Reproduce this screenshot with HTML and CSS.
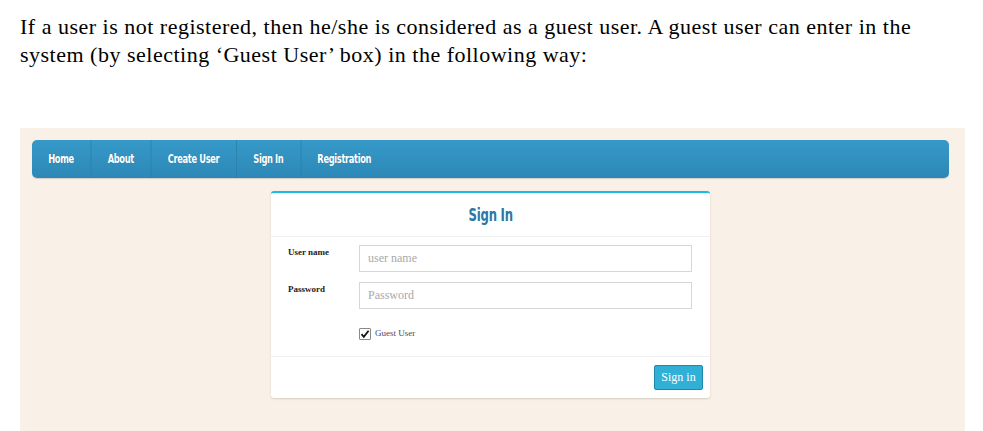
FILE: index.html
```html
<!DOCTYPE html>
<html>
<head>
<meta charset="utf-8">
<link rel="stylesheet" href="styles.css">
</head>
<body>
<p class="intro">If a user is not registered, then he/she is considered as a guest user. A guest user can enter in the system (by selecting ‘Guest User’ box) in the following way:</p>
<div class="stage">
  <nav class="navbar">
    <div class="nav-track">
      <a class="nav-item">Home</a>
      <a class="nav-item">About</a>
      <a class="nav-item">Create User</a>
      <a class="nav-item">Sign In</a>
      <a class="nav-item">Registration</a>
    </div>
  </nav>
  <div class="card">
    <div class="card-head"><span class="card-title">Sign In</span></div>
    <div class="card-body">
      <div class="row">
        <label class="label">User name</label>
        <div class="field">user name</div>
      </div>
      <div class="row">
        <label class="label">Password</label>
        <div class="field">Password</div>
      </div>
      <div class="check-row">
        <span class="checkbox"><svg width="10" height="10" viewBox="0 0 10 10"><path d="M1.5 5.2 L3.8 7.8 L8.6 1.8" fill="none" stroke="#111" stroke-width="1.8"/></svg></span>
        <span class="check-label">Guest User</span>
      </div>
    </div>
    <div class="card-foot">
      <button class="btn">Sign in</button>
    </div>
  </div>
</div>
</body>
</html>
```
FILE: styles.css
```css
html, body { margin: 0; padding: 0; background: #fff; }
body { padding: 0 18px 0 20px; }
.intro {
  margin: 0;
  padding-top: 13px;
  font-family: "Liberation Serif", serif;
  font-size: 22px;
  line-height: 28px;
  letter-spacing: 0.5px;
  color: #000;
  width: 920px;
}
.stage {
  margin-top: 59px;
  background: #f9f1e7;
  padding: 12px 16px 30px 12px;
  box-sizing: border-box;
  height: 303px;
}
.navbar {
  height: 38px;
  border-radius: 5px;
  background: linear-gradient(#3699c9, #2d88b6);
  box-shadow: 0 1px 1px rgba(0,0,0,0.15);
  overflow: hidden;
}
.nav-track {
  display: flex;
  height: 100%;
  width: 1191px;
  transform: scaleX(0.77);
  transform-origin: left center;
}
.nav-item {
  display: flex;
  align-items: center;
  padding: 0 22px 0 21px;
  color: #fff;
  font-family: "DejaVu Sans Condensed", "DejaVu Sans", sans-serif;
  font-stretch: condensed;
  font-weight: bold;
  font-size: 12px;
  letter-spacing: -0.45px;
  border-right: 1px solid #2a7fab;
  text-shadow: 0 0 1px rgba(0,0,0,0.2);
}
.nav-item:last-child { border-right: none; }
.card {
  width: 439px;
  margin: 13px auto 0;
  background: #fff;
  border-top: 2px solid #17bde6;
  border-radius: 3px;
  box-shadow: 0 1px 2px rgba(120,100,80,0.25);
}
.card-head {
  height: 43px;
  border-bottom: 1px solid #f1f1f1;
  display: flex;
  align-items: center;
  justify-content: center;
}
.card-title {
  display: inline-block;
  transform: scaleX(0.72);
  color: #2a78a6;
  font-family: "DejaVu Sans Condensed", "DejaVu Sans", sans-serif;
  font-stretch: condensed;
  font-weight: bold;
  font-size: 18px;
  letter-spacing: -0.3px;
}
.card-body {
  padding: 8px 17px 16px 17px;
}
.row {
  display: flex;
  margin-bottom: 10px;
}
.label {
  width: 71px;
  padding-top: 2px;
  font-family: "Liberation Serif", serif;
  font-weight: bold;
  font-size: 9px;
  color: #222;
}
.field {
  border: 1px solid #d4d7dc;
  display: flex;
  align-items: center;
  padding-left: 8px;
  box-sizing: border-box;
  width: 333px;
  height: 27px;
  font-family: "Liberation Serif", serif;
  font-size: 12px;
  color: #a9a9a9;
}
.check-row {
  display: flex;
  align-items: center;
  margin-left: 71px;
  margin-top: 19px;
  height: 12px;
}
.checkbox {
  width: 10px;
  height: 10px;
  border: 1px solid #8a8a8a;
  border-radius: 1px;
  display: flex;
  align-items: center;
  justify-content: center;
}
.check-label {
  margin-left: 4px;
  margin-top: -3px;
  font-family: "Liberation Serif", serif;
  font-size: 9px;
  color: #3d4a6a;
}
.card-foot {
  border-top: 1px solid #f1f1f1;
  display: flex;
  justify-content: flex-end;
  padding: 8px 7px 8px;
}
.btn {
  width: 49px;
  height: 25px;
  background: #30b0d7;
  border: 1px solid #2187a9;
  border-radius: 2px;
  color: #fff;
  font-family: "Liberation Serif", serif;
  font-size: 12px;
  padding: 0;
}
```
